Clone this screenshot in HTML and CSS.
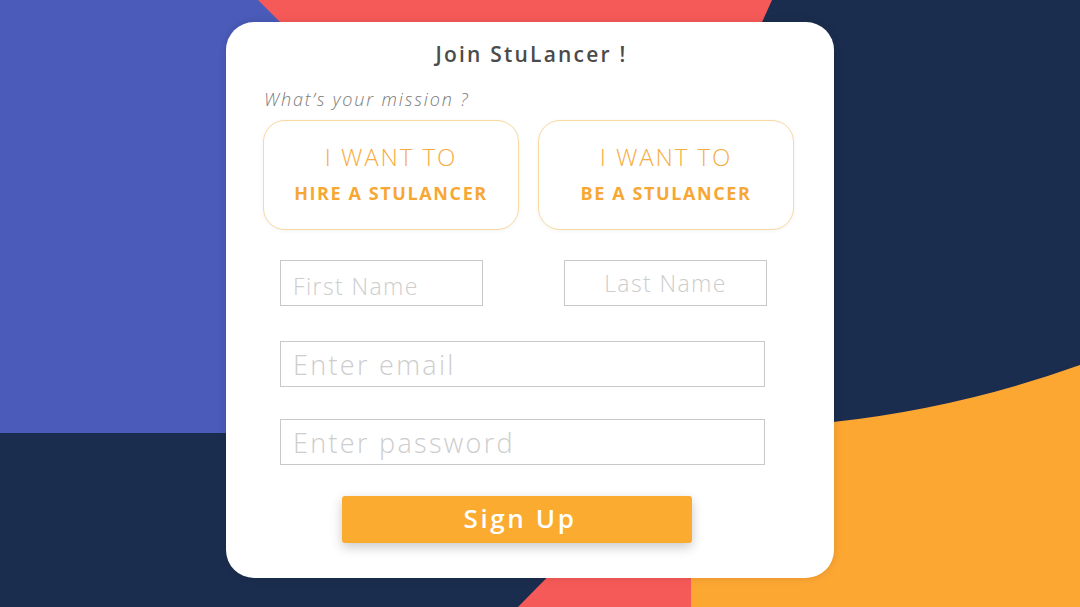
FILE: index.html
```html
<!DOCTYPE html>
<html>
<head>
<meta charset="utf-8">
<link rel="stylesheet" href="styles.css">
</head>
<body>
<svg class="backdrop" viewBox="0 0 1080 607" preserveAspectRatio="none" aria-hidden="true">
  <rect x="0" y="0" width="1080" height="607" fill="#1b2d4e"/>
  <rect x="0" y="0" width="560" height="433" fill="#4a5bb9"/>
  <polygon points="258,0 772,0 727,100 358,100" fill="#f65a58"/>
  <path d="M691,607 L691,430 L833,422 Q960,408 1080,365 L1080,607 Z" fill="#fda733"/>
  <polygon points="518,607 574,550 691,550 691,607" fill="#f65a58"/>
</svg>
<main class="card">
  <h1 class="title">Join StuLancer !</h1>
  <p class="mission">What’s your mission ?</p>
  <div class="options">
    <button class="option"><span class="want">I WANT TO</span><span class="role">HIRE A STULANCER</span></button>
    <button class="option"><span class="want">I WANT TO</span><span class="role">BE A STULANCER</span></button>
  </div>
  <form class="form">
    <div class="name-row">
      <input class="field short" type="text" placeholder="First Name">
      <input class="field short center" type="text" placeholder="Last Name">
    </div>
    <input class="field wide" type="email" placeholder="Enter email">
    <input class="field wide" type="password" placeholder="Enter password">
    <div class="submit-row">
      <button class="signup" type="button">Sign Up</button>
    </div>
  </form>
</main>
</body>
</html>
```
FILE: styles.css
```css
html, body {
  margin: 0;
  padding: 0;
  width: 1080px;
  height: 607px;
  overflow: hidden;
}
body {
  position: relative;
  font-family: "Open Sans", "Noto Sans", sans-serif;
  background: #1b2d4e;
}
.backdrop {
  position: absolute;
  left: 0;
  top: 0;
  width: 1080px;
  height: 607px;
  z-index: 0;
}
.card {
  position: relative;
  z-index: 1;
  box-sizing: border-box;
  width: 608px;
  height: 556px;
  margin: 22px 0 0 226px;
  background: #fff;
  border-radius: 28px;
  box-shadow: 0 0 8px rgba(0,0,0,0.12);
  padding: 18px 40px 0 37px;
}
.title {
  margin: 0;
  text-align: center;
  font-size: 21px;
  line-height: 28px;
  font-weight: 600;
  color: #4b4b4b;
  letter-spacing: 2.2px;
  padding-left: 6px;
}
.mission {
  margin: 20px 0 0 1px;
  font-size: 18px;
  line-height: 22px;
  font-style: italic;
  font-weight: 300;
  color: #7a7a7a;
  letter-spacing: 1.85px;
}
.options {
  display: flex;
  gap: 19px;
  margin-top: 10px;
}
.option {
  width: 256px;
  height: 110px;
  box-sizing: border-box;
  border: 1px solid #f8d9a2;
  border-radius: 22px;
  background: #fff;
  box-shadow: 0 1px 4px rgba(0,0,0,0.05);
  display: flex;
  flex-direction: column;
  align-items: center;
  justify-content: center;
  font-family: inherit;
  padding: 0 0 4px 0;
}
.want {
  font-size: 24px;
  line-height: 30px;
  font-weight: 300;
  color: #f6ad42;
  letter-spacing: 1.9px;
}
.role {
  margin-top: 10px;
  font-size: 18px;
  line-height: 22px;
  font-weight: 700;
  color: #f7a733;
  letter-spacing: 1.6px;
}
.form {
  margin: 30px 0 0 17px;
  display: flex;
  flex-direction: column;
}
.name-row {
  display: flex;
  justify-content: space-between;
  width: 487px;
}
.field {
  box-sizing: border-box;
  height: 46px;
  border: 1px solid #c9c9c9;
  background: #fff;
  font-family: inherit;
  color: #555;
  outline: none;
  padding: 0 12px;
}
.field::placeholder {
  color: #cdcdcd;
  font-weight: 300;
}
.short {
  width: 203px;
  font-size: 23px;
  letter-spacing: 1.4px;
  padding-top: 6px;
}
.short.center {
  text-align: center;
  padding-top: 0;
}
.wide {
  width: 485px;
  font-size: 27px;
  letter-spacing: 2.3px;
  padding-top: 0;
}
.name-row + .wide {
  margin-top: 35px;
}
.wide + .wide {
  margin-top: 32px;
}
.submit-row {
  margin-top: 31px;
  padding-left: 62px;
}
.signup {
  width: 350px;
  height: 47px;
  border: none;
  border-radius: 3px;
  background: #fbab30;
  color: #fff;
  font-family: inherit;
  font-size: 26px;
  font-weight: 600;
  letter-spacing: 2.6px;
  box-shadow: 0 4px 12px rgba(0,0,0,0.22);
  padding: 0 0 4px 6px;
}
```
